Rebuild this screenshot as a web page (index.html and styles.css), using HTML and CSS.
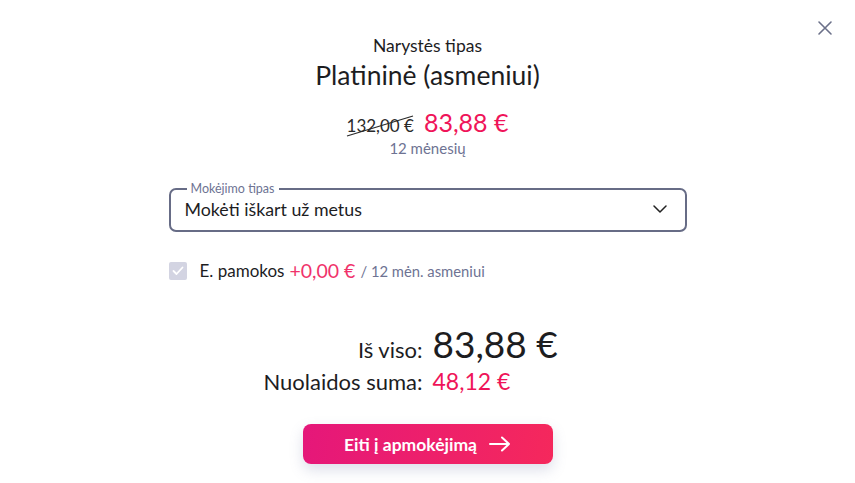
FILE: index.html
```html
<!DOCTYPE html>
<html lang="lt">
<head>
<meta charset="utf-8">
<link rel="stylesheet" href="styles.css">
</head>
<body>
<div class="modal">
  <button class="close" aria-label="Uždaryti">
    <svg width="16" height="16" viewBox="0 0 16 16"><path d="M2 2L14 14M14 2L2 14" stroke="#6b7089" stroke-width="1.6" stroke-linecap="round"/></svg>
  </button>
  <div class="head">
    <div class="subtitle">Narystės tipas</div>
    <div class="title">Platininė (asmeniui)</div>
  </div>
  <div class="price">
    <span class="old">132,00 €<svg class="strike" width="68" height="22" viewBox="0 0 68 22"><path d="M1 21L67 1" stroke="#2a2a2a" stroke-width="1.2"/></svg></span>
    <span class="new">83,88 €</span>
  </div>
  <div class="period">12 mėnesių</div>
  <fieldset class="select">
    <legend>Mokėjimo tipas</legend>
    <div class="select-row">
      <span>Mokėti iškart už metus</span>
      <svg width="14" height="8" viewBox="0 0 14 8"><path d="M1 1L7 7L13 1" fill="none" stroke="#222" stroke-width="1.5" stroke-linecap="round" stroke-linejoin="round"/></svg>
    </div>
  </fieldset>
  <div class="option">
    <span class="check"><svg width="12" height="10" viewBox="0 0 12 10"><path d="M1.5 5L4.5 8L10.5 1.5" fill="none" stroke="#fff" stroke-width="1.8" stroke-linecap="round" stroke-linejoin="round"/></svg></span>
    <span class="opt-name">E. pamokos</span>
    <span class="opt-price">+0,00 €</span>
    <span class="opt-note">/ 12 mėn. asmeniui</span>
  </div>
  <div class="totals">
    <div class="label l1">Iš viso:</div>
    <div class="val total">83,88 €</div>
    <div class="label l2">Nuolaidos suma:</div>
    <div class="val disc">48,12 €</div>
  </div>
  <div class="actions">
    <button class="pay">Eiti į apmokėjimą
      <svg width="22" height="16" viewBox="0 0 22 16"><path d="M1 8H20M13 1.5L20 8L13 14.5" fill="none" stroke="#fff" stroke-width="2" stroke-linecap="round" stroke-linejoin="round"/></svg>
    </button>
  </div>
</div>
</body>
</html>
```
FILE: styles.css
```css
* { box-sizing: border-box; }
html, body { margin: 0; padding: 0; background: #fff; }
body {
  font-family: "Lato", "Noto Sans", sans-serif;
  color: #1d1d1f;
  width: 855px;
  height: 483px;
  overflow: hidden;
}
.modal {
  position: relative;
  width: 855px;
  height: 483px;
  padding-top: 36px;
  display: flex;
  flex-direction: column;
  align-items: center;
}
.close {
  position: absolute;
  top: 20px;
  right: 22px;
  width: 16px;
  height: 16px;
  padding: 0;
  border: 0;
  background: none;
  line-height: 0;
}
.head { text-align: center; }
.subtitle { font-size: 17.5px; line-height: 20px; }
.title { font-size: 26.5px; line-height: 32px; margin-top: 3px; }
.price {
  margin-top: 14px;
  display: flex;
  align-items: baseline;
  gap: 10px;
  line-height: 34px;
}
.old { position: relative; font-size: 17px; color: #2a2a2a; }
.strike { position: absolute; left: -1px; top: 6px; }
.new { font-size: 25px; color: #ef1459; }
.period { font-size: 15px; color: #6e7393; line-height: 18px; margin-top: -4px; }
.select {
  margin: 26px 0 0;
  width: 518px;
  height: 49px;
  border: 2px solid #676c86;
  border-radius: 7px;
  padding: 0 14px 0 14px;
  position: relative;
}
.select legend {
  font-size: 12.5px;
  color: #6e7393;
  padding: 0 4px;
  margin-left: 2px;
  line-height: 12px;
}
.select-row {
  display: flex;
  justify-content: space-between;
  align-items: center;
  font-size: 17.8px;
  height: 28px;
  margin-top: 0;
}
.select-row svg { margin-right: 4px; }
.option {
  width: 518px;
  margin-top: 27px;
  display: flex;
  align-items: center;
  font-size: 17px;
}
.check {
  width: 18px;
  height: 18px;
  border-radius: 2px;
  background: #d3d4e2;
  display: flex;
  align-items: center;
  justify-content: center;
  margin-right: 13px;
}
.opt-name { margin-right: 5px; }
.opt-price { color: #f0336b; font-size: 19.5px; margin-right: 5px; }
.opt-note { color: #6e7393; font-size: 14.8px; }
.totals {
  width: 855px;
  margin-top: 41px;
  display: grid;
  grid-template-columns: 1fr 1fr;
  column-gap: 10px;
  align-items: baseline;
}
.label { text-align: right; font-size: 22px; }
.val { text-align: left; }
.total { font-size: 37px; line-height: 42px; }
.disc { font-size: 23px; color: #ef1459; line-height: 32px; }
.actions { margin-top: 27px; }
.pay {
  width: 250px;
  height: 40px;
  border: 0;
  border-radius: 8px;
  background: linear-gradient(100deg, #e5177a 0%, #f5285c 100%);
  color: #fff;
  font-family: inherit;
  font-weight: 700;
  font-size: 17.5px;
  display: flex;
  align-items: center;
  justify-content: center;
  gap: 12px;
  box-shadow: 0 6px 14px rgba(100, 110, 160, 0.22);
  padding: 0 0 0 0;
}
```
